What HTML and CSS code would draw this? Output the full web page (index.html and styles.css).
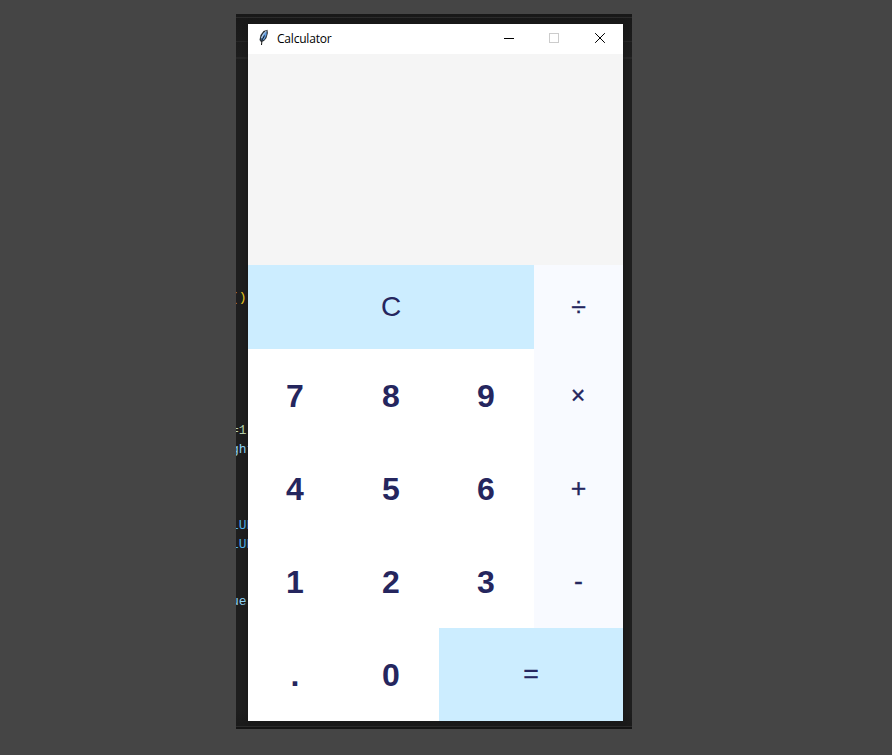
FILE: index.html
```html
<!DOCTYPE html>
<html lang="en">
<head>
<meta charset="utf-8">
<title>Calculator</title>
<link rel="stylesheet" href="styles.css">
</head>
<body>
<div class="editor">
<pre class="code"><span class="yellow">()</span>






<span class="num">=1</span>
<span class="var">ght</span>



<span class="const">LUE</span>
<span class="const">LUE</span>


<span class="var">ue</span></pre>
<main class="window">
  <header class="titlebar">
    <svg class="feather" width="12" height="18" viewBox="0 0 12 18">
      <path d="M3 13 1.500 11 2.500 6 5.500 2 9.500 .8 9.900 4 8.500 9 6 12Z" fill="#2b3238"/>
      <path d="M3.500 12 3.300 8 5.500 4 8.700 2 8.500 6 6.500 10.200Z" fill="#5e9be0"/>
      <path d="M8.300 1.800 4.800 6 3.500 9" fill="none" stroke="#d5dde4" stroke-width=".9"/>
      <path d="M6.500 6.500 4 11 3.500 16" fill="none" stroke="#111" stroke-width="1"/>
    </svg>
    <span class="title">Calculator</span>
    <svg class="controls" width="138" height="30" viewBox="0 0 138 30">
      <path d="M19 14.500h10" stroke="#000"/>
      <rect x="64.500" y="9.500" width="9" height="9" fill="none" stroke="#ccc"/>
      <path d="M110.500 9.500l9 9m0-9l-9 9" stroke="#000" stroke-linecap="square"/>
    </svg>
  </header>
  <div class="display"></div>
  <div class="keys">
    <button class="key accent clear">C</button>
    <button class="key op">÷</button>
    <button class="key">7</button>
    <button class="key mid">8</button>
    <button class="key">9</button>
    <button class="key op times">×</button>
    <button class="key">4</button>
    <button class="key mid">5</button>
    <button class="key">6</button>
    <button class="key op">+</button>
    <button class="key">1</button>
    <button class="key mid">2</button>
    <button class="key">3</button>
    <button class="key op">-</button>
    <button class="key">.</button>
    <button class="key mid">0</button>
    <button class="key accent equals">=</button>
  </div>
</main>
</div>
</body>
</html>
```
FILE: styles.css
```css
* { box-sizing: border-box; }
body {
  margin: 0;
  height: 755px;
  padding: 14px 0 0 236px;
  background: #454545;
  overflow: hidden;
}
.editor {
  display: flex;
  align-items: flex-start;
  width: 396px;
  height: 715px;
  padding-top: 10px;
  background:
    linear-gradient(#2b2b2b, #2b2b2b) 0 3px / 100% 1px no-repeat,
    linear-gradient(#262626, #262626) 0 27px / 100% 1px no-repeat,
    linear-gradient(#262626, #262626) 0 43px / 100% 2px no-repeat,
    linear-gradient(#2b2b2b, #2b2b2b) 0 712px / 100% 1px no-repeat,
    linear-gradient(#141414, #141414) 0 713px / 100% 2px no-repeat,
    linear-gradient(#181818, #1e1e1e 50px, #1e1e1e 695px, #191919);
}
.code {
  width: 12px;
  margin: 0;
  padding-top: 264px;
  overflow: hidden;
  font: 13px/19px "Liberation Mono", monospace;
}
.code span { margin-left: -5px; }
.yellow { color: #e8c81e; }
.num { color: #b5cea8; }
.var { color: #8fd3f5; }
.const { color: #4fb5ee; }
.window {
  width: 375px;
  height: 697px;
  background: #fff;
  box-shadow: 0 0 4px #161616;
}
.titlebar {
  display: flex;
  height: 30px;
  padding-left: 10px;
}
.feather { margin-top: 5px; }
.title {
  margin-left: 7px;
  color: #000;
  font: 12px/29px "Open Sans", sans-serif;
  letter-spacing: -0.2px;
}
.controls { margin-left: auto; }
.display { height: 211px; background: #f5f5f5; }
.keys {
  display: grid;
  grid-template-columns: 95px 96px 95px 89px;
  grid-template-rows: 84px repeat(4, 93px);
}
.key {
  margin: 0;
  padding: 0 1px 0 0;
  border: 0;
  background: #fff;
  color: #25265e;
  font: bold 32px/1 "Liberation Sans", Arial, sans-serif;
}
.mid { padding: 0; }
.op, .accent { padding: 0; font-size: 26.667px; font-weight: normal; }
.op { background: #f8faff; -webkit-text-stroke: 0.3px #25265e; }
.times { padding-right: 1px; font-size: 25px; }
.accent { background: #ccedff; }
.clear { grid-column: span 3; font-size: 28px; }
.equals { grid-column: span 2; padding-bottom: 2px; -webkit-text-stroke: 0.3px #25265e; }
```
